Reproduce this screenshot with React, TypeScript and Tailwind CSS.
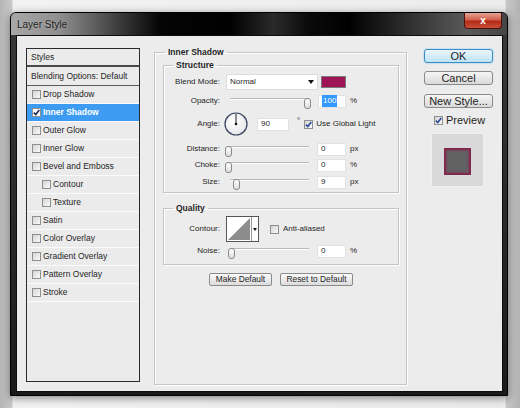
import React from "react";

const font = "font-['Liberation_Sans',Arial,sans-serif]";

function Check({ checked = false, white = false }: { checked?: boolean; white?: boolean }) {
  return (
    <span
      className={`flex h-[9px] w-[9px] shrink-0 items-center justify-center border border-[#8e8e8e] ${
        white ? "bg-white" : "bg-gradient-to-br from-[#d4d4d4] to-[#fbfbfb]"
      }`}
    >
      {checked && (
        <svg width="7" height="7" viewBox="0 0 7 7">
          <path d="M0.8 3.6 L2.8 5.6 L6.3 1" fill="none" stroke={white ? "#1d2a55" : "#2a4a9c"} strokeWidth="1.6" />
        </svg>
      )}
    </span>
  );
}

function Slider({ thumb }: { thumb: string }) {
  return (
    <div className="relative h-[12px] w-[88px] shrink-0">
      <div className="ml-[5px] mt-[5px] h-[2px] w-[79px] border-b border-white bg-[#b9b9b9]" />
      <div className={`absolute top-0 h-[11px] w-[7px] rounded-[3px] border border-[#8a8a8a] bg-gradient-to-b from-white to-[#dedede] ${thumb}`} />
    </div>
  );
}

function Field({ value, w = "w-[29px]", selected = false }: { value: string; w?: string; selected?: boolean }) {
  return (
    <div className={`flex h-[13px] shrink-0 items-center border border-[#e2e2e2] bg-white pl-[3px] text-[8px] ${w}`}>
      {selected ? <span className="bg-[#3399ff] px-[1px] text-white">{value}</span> : value}
    </div>
  );
}

function Label({ children }: { children: React.ReactNode }) {
  return <div className="w-[56px] shrink-0 text-right text-[8px]">{children}</div>;
}

function SliderRow({
  label,
  thumb,
  value,
  unit,
  className,
  selected = false,
}: {
  label: string;
  thumb: string;
  value: string;
  unit: string;
  className: string;
  selected?: boolean;
}) {
  return (
    <div className={`flex h-[14px] items-center ${className}`}>
      <Label>{label}</Label>
      <div className="ml-[5px]">
        <Slider thumb={thumb} />
      </div>
      <div className={selected ? "ml-[5px]" : "ml-[4px]"}>
        <Field value={value} selected={selected} w={selected ? "w-[28px]" : "w-[29px]"} />
      </div>
      <span className="ml-[4px] text-[8px]">{unit}</span>
    </div>
  );
}

const effects = [
  { label: "Drop Shadow" },
  { label: "Inner Shadow", checked: true, active: true },
  { label: "Outer Glow" },
  { label: "Inner Glow" },
  { label: "Bevel and Emboss" },
  { label: "Contour", sub: true },
  { label: "Texture", sub: true },
  { label: "Satin" },
  { label: "Color Overlay" },
  { label: "Gradient Overlay" },
  { label: "Pattern Overlay" },
  { label: "Stroke" },
];

function StylesList() {
  return (
    <div className="ml-[9px] mt-[12px] h-[334px] w-[114px] shrink-0 border border-[#2b2b2b] bg-[#ebebeb] text-[8.5px]">
      <div className="flex h-[18px] items-center border-b-2 border-[#4a4a4a] pl-[4px]">Styles</div>
      <div className="flex h-[19px] items-center border-b border-[#5a5a5a] pl-[4px]">Blending Options: Default</div>
      {effects.map((e) => (
        <div
          key={e.label}
          className={`flex h-[18px] items-center gap-[2px] border-b border-[#fafafa] ${e.sub ? "pl-[15px]" : "pl-[5px]"} ${
            e.active ? "bg-[#3d9cf2] font-bold text-white" : ""
          }`}
        >
          <Check checked={e.checked} white={e.active} />
          <span>{e.label}</span>
        </div>
      ))}
    </div>
  );
}

function Group({ title, children, className = "" }: { title: string; children: React.ReactNode; className?: string }) {
  return (
    <fieldset className={`border border-[#c4c4c4] p-0 shadow-[1px_1px_0_#fff,inset_1px_1px_0_#fff] ${className}`}>
      <legend className="ml-[9px] px-[3px] text-[8.5px] font-bold leading-[10px]">{title}</legend>
      {children}
    </fieldset>
  );
}

function Structure() {
  return (
    <Group title="Structure" className="mt-[3px]">
      <div className="pb-[3px] pt-[4px]">
        <div className="flex h-[16px] items-center">
          <Label>Blend Mode:</Label>
          <div className="ml-[6px] flex h-[16px] w-[92px] items-center justify-between border border-[#dcdcdc] bg-white pl-[3px] pr-[3px] text-[8px]">
            <span>Normal</span>
            <svg width="6" height="4" viewBox="0 0 6 4">
              <path d="M0 0 H6 L3 4 Z" fill="#111" />
            </svg>
          </div>
          <div className="ml-[3px] h-[12px] w-[25px] border border-[#7a7a7a] bg-[#9e1454]" />
        </div>
        <SliderRow label="Opacity:" thumb="left-[79px]" value="100" unit="%" className="mt-[4px]" selected />
        <div className="mt-[4px] flex h-[24px] items-center">
          <Label>Angle:</Label>
          <svg className="ml-[4px] shrink-0" width="24" height="24" viewBox="0 0 24 24">
            <defs>
              <radialGradient id="dial" cx="0.4" cy="0.35" r="0.7">
                <stop offset="0" stopColor="#ffffff" />
                <stop offset="1" stopColor="#e4e6ea" />
              </radialGradient>
            </defs>
            <circle cx="12" cy="12" r="11" fill="url(#dial)" stroke="#33405a" strokeWidth="1.2" />
            <line x1="12" y1="12" x2="12" y2="2" stroke="#222" strokeWidth="1" />
            <circle cx="12" cy="12" r="1.3" fill="#111" />
          </svg>
          <div className="ml-[9px]">
            <Field value="90" w="w-[32px]" />
          </div>
          <span className="ml-[8px] self-start pt-[5px] text-[8px] leading-[8px]">°</span>
          <div className="ml-[4px] flex items-center gap-[3px] text-[8px]">
            <Check checked />
            <span>Use Global Light</span>
          </div>
        </div>
        <SliderRow label="Distance:" thumb="left-0" value="0" unit="px" className="mt-[6px]" />
        <SliderRow label="Choke:" thumb="left-0" value="0" unit="%" className="mt-[2px]" />
        <SliderRow label="Size:" thumb="left-[8px]" value="9" unit="px" className="mt-[3px]" />
      </div>
    </Group>
  );
}

function Quality() {
  return (
    <Group title="Quality" className="mt-[10px]">
      <div className="pb-[6px] pt-[3px]">
        <div className="flex h-[26px] items-center">
          <Label>Contour:</Label>
          <div className="ml-[6px] flex h-[26px] w-[33px] border border-[#555] bg-white">
            <svg width="24" height="24" viewBox="0 0 24 24" className="shrink-0">
              <polygon points="1,23 23,1 23,23" fill="#8c8c8c" />
            </svg>
            <div className="flex flex-1 items-center justify-center border-l border-[#9a9a9a]">
              <svg width="4" height="3" viewBox="0 0 4 3">
                <path d="M0 0 H4 L2 3 Z" fill="#111" />
              </svg>
            </div>
          </div>
          <div className="ml-[11px] flex items-center gap-[4px] text-[8px]">
            <Check />
            <span>Anti-aliased</span>
          </div>
        </div>
        <SliderRow label="Noise:" thumb="left-[3px]" value="0" unit="%" className="mt-[2px]" />
      </div>
    </Group>
  );
}

function SmallButton({ children, w }: { children: React.ReactNode; w: string }) {
  return (
    <div className={`flex h-[13px] items-center justify-center rounded-[2px] border border-[#8a8a8a] bg-gradient-to-b from-[#fafafa] to-[#dcdcdc] text-[8.4px] ${w}`}>
      {children}
    </div>
  );
}

function EffectPanel() {
  return (
    <fieldset className="ml-[14px] mt-[11px] w-[253px] shrink-0 border border-[#c4c4c4] p-0 shadow-[1px_1px_0_#fff,inset_1px_1px_0_#fff]">
      <legend className="ml-[10px] px-[3px] text-[8.5px] font-bold leading-[10px]">Inner Shadow</legend>
      <div className="h-[324px] pl-[8px] pr-[7px]">
        <Structure />
        <Quality />
        <div className="mt-[8px] flex justify-center gap-[8px]">
          <SmallButton w="w-[63px]">Make Default</SmallButton>
          <SmallButton w="w-[73px]">Reset to Default</SmallButton>
        </div>
      </div>
    </fieldset>
  );
}

function BigButton({ children, primary = false, className = "" }: { children: React.ReactNode; primary?: boolean; className?: string }) {
  return (
    <div
      className={`flex h-[14px] items-center justify-center rounded-[3px] border text-[11px] ${
        primary
          ? "border-[#3a8cc4] bg-gradient-to-b from-[#eaf6fd] to-[#bfe3f6] shadow-[0_0_2px_#6fc3f0]"
          : "border-[#8a8a8a] bg-gradient-to-b from-[#f6f6f6] to-[#d9d9d9]"
      } ${className}`}
    >
      {children}
    </div>
  );
}

function Actions() {
  return (
    <div className="ml-[17px] mt-[13px] w-[69px] shrink-0">
      <BigButton primary>OK</BigButton>
      <BigButton className="mt-[8px]">Cancel</BigButton>
      <BigButton className="mt-[9px]">New Style...</BigButton>
      <div className="ml-[10px] mt-[6px] flex h-[12px] items-center gap-[3px] text-[11px]">
        <Check checked />
        <span>Preview</span>
      </div>
      <div className="ml-[7px] mt-[7px] flex h-[54px] w-[53px] items-center justify-center border border-[#efefef] bg-[#d9d9d9]">
        <div className="mt-[2px] h-[27px] w-[27px] border-2 border-[#7e2a4c] bg-[#626262] shadow-[inset_0_0_3px_#8a2d55]" />
      </div>
    </div>
  );
}

export default function App() {
  return (
    <div
      className={`h-[408px] w-[520px] overflow-hidden bg-[linear-gradient(to_right,#b5b5b5_0px,#cacaca_12px,#f2f2f2_13px,#ececec_505px,#c8c8c8_506px,#b2b2b2_520px)] pt-[12px] text-[#1f1f1f] ${font}`}
    >
      <div className="ml-[10px] flex h-[384px] w-[498px] flex-col rounded-t-[6px] border border-black bg-[linear-gradient(to_bottom,#3a3a3a,#1a1a1a)] shadow-[0_2px_8px_rgba(0,0,0,0.45)]">
        <div className="flex h-[22px] shrink-0 items-start justify-between rounded-t-[5px] bg-[linear-gradient(90deg,#a8a8a8_0%,#8e8e8e_10%,#3a3a3a_22%,#050505_30%,#000_44%,#2a2a2a_53%,#0a0a0a_60%,#000_68%,#3e3e3e_84%,#5a5a5a_92%,#444_100%)]">
          <span className="self-center pl-[6px] text-[10px] text-[#1a1a1a] [text-shadow:0_0_2px_rgba(255,255,255,0.35)]">Layer Style</span>
          <div className="mr-[5px] flex h-[16px] w-[38px] items-center justify-center rounded-b-[4px] border border-t-0 border-[#4a140c] bg-[linear-gradient(to_bottom,#e7a497_0%,#d0604c_45%,#b42a17_55%,#c6503a_100%)] text-[10px] font-bold text-white">
            x
          </div>
        </div>
        <div className="mb-[3px] ml-[5px] mr-[4px] flex flex-1 items-start border border-[#0d0d0d] bg-[#ececec]">
          <StylesList />
          <EffectPanel />
          <Actions />
        </div>
      </div>
    </div>
  );
}
